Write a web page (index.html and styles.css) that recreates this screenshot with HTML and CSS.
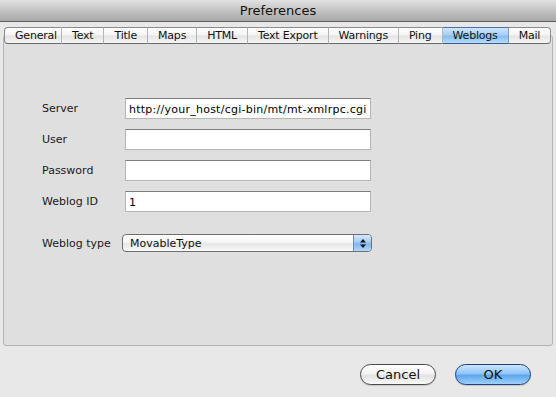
FILE: index.html
```html
<!DOCTYPE html>
<html lang="en">
<head>
    <meta charset="UTF-8">
    <title>Preferences</title>
    <link rel="stylesheet" href="styles.css">
</head>
<body>
    <div class="titlebar">Preferences</div>
    <div class="panel">
        <div class="tabs">
            <div class="tab first">General</div>
            <div class="tab">Text</div>
            <div class="tab">Title</div>
            <div class="tab">Maps</div>
            <div class="tab">HTML</div>
            <div class="tab">Text Export</div>
            <div class="tab">Warnings</div>
            <div class="tab">Ping</div>
            <div class="tab selected">Weblogs</div>
            <div class="tab last">Mail</div>
        </div>
        <div class="form">
            <label for="server">Server</label>
            <input type="text" id="server" value="http://your_host/cgi-bin/mt/mt-xmlrpc.cgi">
            <label for="user">User</label>
            <input type="text" id="user">
            <label for="password">Password</label>
            <input type="text" id="password">
            <label for="weblog-id">Weblog ID</label>
            <input type="text" id="weblog-id" value="1">
            <label class="type-label">Weblog type</label>
            <div class="popup">
                <span>MovableType</span>
                <span class="arrows">
                    <svg width="8" height="11" viewBox="0 0 8 11">
                        <path d="M4 1 L7 4.5 L1 4.5 Z" fill="#111"/>
                        <path d="M4 10 L7 6.5 L1 6.5 Z" fill="#111"/>
                    </svg>
                </span>
            </div>
        </div>
    </div>
    <div class="buttons">
        <button class="btn">Cancel</button>
        <button class="btn default">OK</button>
    </div>
</body>
</html>
```

FILE: styles.css
```css
body {
    margin: 0;
    width: 556px;
    height: 397px;
    background: #e8e8e8;
    font-family: 'DejaVu Sans', sans-serif;
    font-size: 11px;
    color: #111;
    overflow: hidden;
}

.titlebar {
    height: 22px;
    line-height: 21px;
    text-align: center;
    font-size: 13px;
    color: #111;
    background: linear-gradient(#e2e2e2, #bdbdbd 60%, #a9a9a9);
    border-bottom: 1px solid #5e5e5e;
    box-sizing: border-box;
}

.panel {
    margin: 13px 3px 0;
    height: 311px;
    box-sizing: border-box;
    background: #dfdfdf;
    border: 1px solid #b4b4b4;
    border-radius: 3px;
}

.tabs {
    display: flex;
    margin-top: -9px;
    height: 17px;
}

.tab {
    flex-shrink: 0;
    white-space: nowrap;
    height: 17px;
    line-height: 16px;
    padding: 0 10px;
    box-sizing: border-box;
    background: linear-gradient(#ffffff, #f4f4f4 45%, #e4e4e4 55%, #f6f6f6);
    border-top: 1px solid #8c8c8c;
    border-bottom: 1px solid #6a6a6a;
    border-right: 1px solid #b5b5b5;
    color: #111;
    letter-spacing: -0.2px;
}

.tab.first {
    border-left: 1px solid #8c8c8c;
    border-radius: 4px 0 0 4px;
    width: 58px;
}

.tab.last {
    border-right: 1px solid #8c8c8c;
    border-radius: 0 4px 4px 0;
}

.tab.selected {
    background: linear-gradient(#cfe6fd, #a6cff6 45%, #86bdf2 55%, #b6dcfb);
    border-top-color: #4d6fa3;
    border-bottom-color: #3b5d93;
    border-right-color: #7b9ac4;
}

.form {
    display: grid;
    grid-template-columns: 83px 246px;
    row-gap: 10px;
    align-items: center;
    padding: 54px 0 0 38px;
}

.form label {
    color: #1a1a1a;
}

.form input {
    height: 21px;
    box-sizing: border-box;
    margin: 0;
    padding: 1px 3px 0;
    font-family: 'DejaVu Sans', sans-serif;
    font-size: 11px;
    letter-spacing: 0.25px;
    color: #000;
    background: #fff;
    border: 1px solid #b6b6b6;
    border-top-color: #7e7e7e;
    border-radius: 0;
    outline: none;
}

.type-label {
    margin-top: 12px;
}

.popup {
    margin: 12px 0 0 -3px;
    width: 250px;
    height: 18px;
    box-sizing: border-box;
    display: flex;
    align-items: center;
    justify-content: space-between;
    padding-left: 7px;
    border: 1px solid #6f6f6f;
    border-radius: 4px;
    background: linear-gradient(#ffffff, #f6f6f6 45%, #e6e6e6 55%, #fafafa);
    overflow: hidden;
}

.popup .arrows {
    width: 17px;
    height: 16px;
    display: flex;
    align-items: center;
    justify-content: center;
    border-left: 1px solid #6d8bbb;
    background: linear-gradient(#d4e8fc, #a3cbf3 45%, #7fb6ee 55%, #b3d8fa);
}

.buttons {
    display: flex;
    justify-content: flex-end;
    gap: 19px;
    padding: 18px 25px 0 0;
}

.btn {
    width: 76px;
    height: 21px;
    padding: 0;
    font-family: 'DejaVu Sans', sans-serif;
    font-size: 13px;
    color: #111;
    border: 1px solid #4b4b4b;
    border-radius: 11px;
    background: linear-gradient(#ffffff, #f3f3f3 45%, #e2e2e2 55%, #f9f9f9);
    box-shadow: 0 1px 1px rgba(0, 0, 0, 0.15);
}

.btn.default {
    border-color: #1d3f7a;
    background: linear-gradient(#cde6ff, #90c4f6 45%, #5ea7ee 55%, #9fd0fb);
}
```
